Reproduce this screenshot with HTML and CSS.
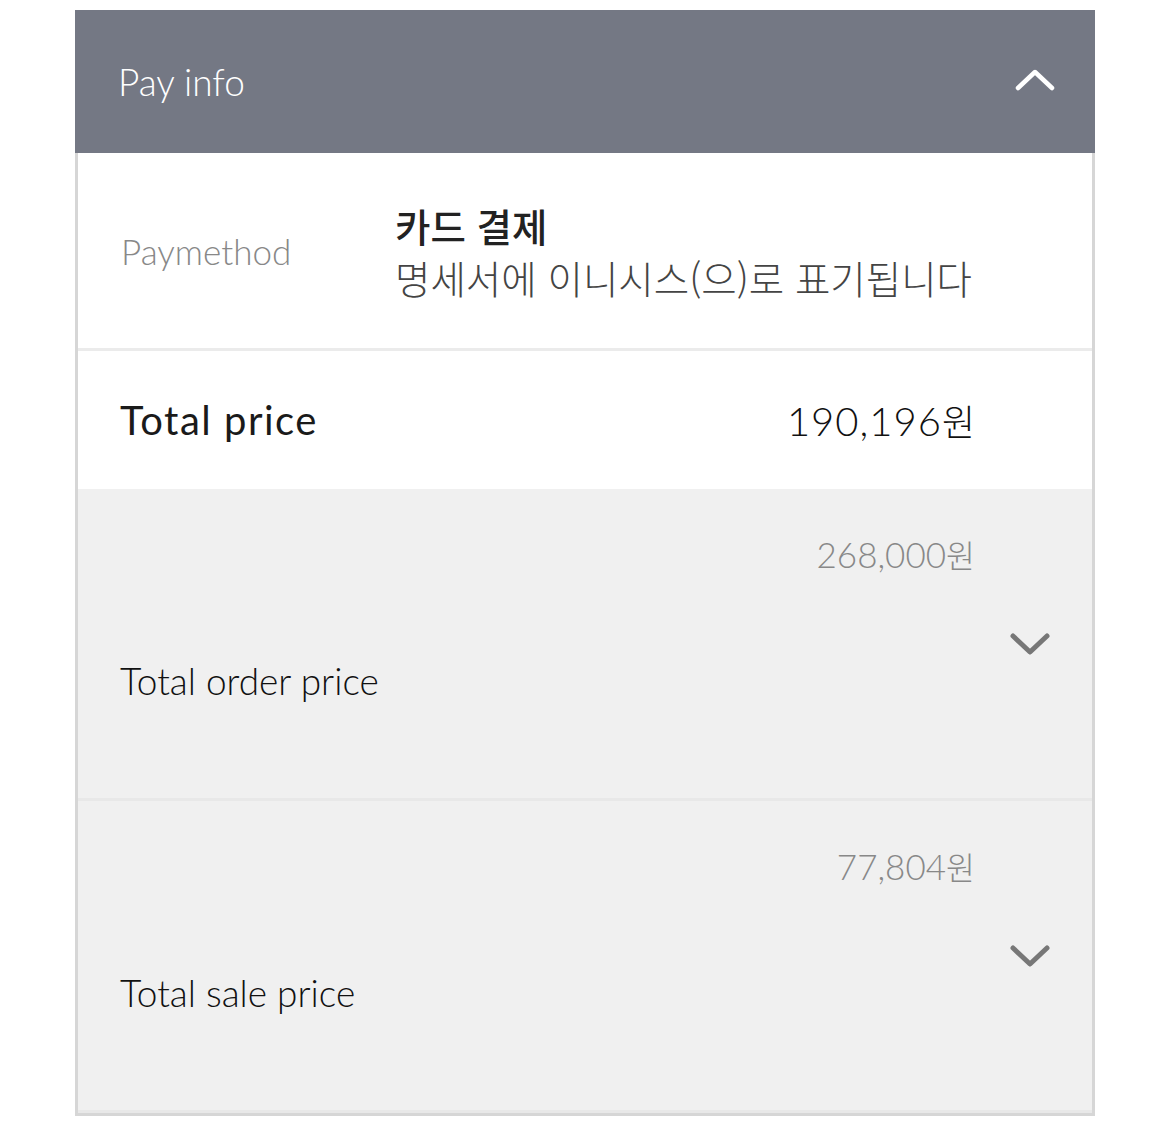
FILE: index.html
```html
<!DOCTYPE html>
<html lang="ko">
<head>
<meta charset="utf-8">
<title>Pay info</title>
<link rel="stylesheet" href="styles.css">
</head>
<body>
<div class="card">
  <div class="head">
    <span class="head-title">Pay info</span>
    <svg class="chev-up" width="40" height="24" viewBox="0 0 40 24"><path d="M3 20 L20 4 L37 20" fill="none" stroke="#fff" stroke-width="4.5" stroke-linecap="round" stroke-linejoin="round"/></svg>
  </div>
  <div class="body">
    <div class="row row-method">
      <div class="method-label">Paymethod</div>
      <div class="method-value">
        <div class="method-name">카드 결제</div>
        <div class="method-desc">명세서에 이니시스(으)로 표기됩니다</div>
      </div>
    </div>
    <div class="row row-total">
      <div class="total-label">Total price</div>
      <div class="total-amount">190,196<span class="won">원</span></div>
    </div>
    <div class="row row-detail">
      <div class="detail-amount">268,000<span class="won">원</span></div>
      <div class="detail-line">
        <div class="detail-label">Total order price</div>
        <svg class="chev-down" width="40" height="24" viewBox="0 0 40 24"><path d="M3 4 L20 20 L37 4" fill="none" stroke="#777" stroke-width="5" stroke-linecap="round" stroke-linejoin="round"/></svg>
      </div>
    </div>
    <div class="row row-detail">
      <div class="detail-amount">77,804<span class="won">원</span></div>
      <div class="detail-line">
        <div class="detail-label">Total sale price</div>
        <svg class="chev-down" width="40" height="24" viewBox="0 0 40 24"><path d="M3 4 L20 20 L37 4" fill="none" stroke="#777" stroke-width="5" stroke-linecap="round" stroke-linejoin="round"/></svg>
      </div>
    </div>
  </div>
</div>
</body>
</html>
```
FILE: styles.css
```css
* { box-sizing: border-box; }
html, body { margin: 0; padding: 0; background: #fff; }
body {
  padding: 10px 75px;
  font-family: "Lato", "Noto Sans CJK KR", sans-serif;
  font-weight: 300;
}
.card { width: 1020px; }
.head {
  height: 143px;
  background: #747884;
  display: flex;
  align-items: center;
  justify-content: space-between;
  padding: 0 40px 0 43px;
}
.head-title {
  color: #fff;
  font-size: 37px;
  font-weight: 300;
  position: relative;
  top: 0;
}
.chev-up { margin-top: -4px; }
.body {
  border: 3px solid #d6d6d6;
  border-top: none;
}
.row { display: flex; }
.row-method {
  height: 198px;
  align-items: center;
  padding: 0 0 0 43px;
  background: #fff;
  border-bottom: 3px solid #ebebeb;
}
.method-label {
  width: 274px;
  font-size: 35px;
  color: #888;
  font-weight: 300;
}
.method-value { display: flex; flex-direction: column; }
.method-name {
  font-family: "Noto Sans CJK KR", sans-serif;
  font-weight: 500;
  font-size: 38.5px;
  color: #222;
  line-height: 52px;
}
.method-desc {
  font-family: "Noto Sans CJK KR", sans-serif;
  font-weight: 300;
  font-size: 38.5px;
  color: #444;
  line-height: 52px;
}
.row-total {
  height: 138px;
  align-items: center;
  justify-content: space-between;
  padding: 0 117px 0 42px;
  background: #fff;
}
.total-label {
  font-size: 40px;
  color: #1a1a1a;
  font-weight: 400;
  letter-spacing: 1.5px;
}
.total-amount {
  font-size: 40px;
  color: #111;
  font-weight: 300;
  letter-spacing: 1px;
}
.won {
  font-family: "Noto Sans CJK KR", sans-serif;
  font-weight: 300;
  font-size: 0.9em;
  letter-spacing: 0;
}
.row-detail {
  height: 312px;
  flex-direction: column;
  background: #f0f0f0;
  border-bottom: 3px solid #e8e8e8;
  padding: 43px 0 0 42px;
}
.detail-amount {
  align-self: flex-end;
  margin-right: 117px;
  font-size: 35px;
  color: #888;
  font-weight: 300;
  line-height: 44px;
}
.detail-line {
  display: flex;
  justify-content: space-between;
  align-items: flex-start;
  padding-right: 42px;
  margin-top: 56px;
}
.detail-label {
  font-size: 37px;
  color: #111;
  font-weight: 300;
  margin-top: 26px;
}
.chev-down { margin-top: 0; }
```
